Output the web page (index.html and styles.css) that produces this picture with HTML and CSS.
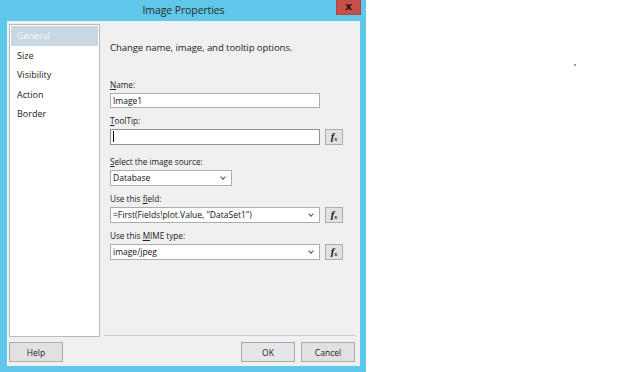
FILE: index.html
```html
<!DOCTYPE html>
<html lang="en">
<head>
    <meta charset="UTF-8">
    <title>Image Properties</title>
    <link rel="stylesheet" href="styles.css">
</head>
<body>
    <div class="dialog">
        <div class="titlebar">
            <span class="title">Image Properties</span>
            <span class="close-btn">x</span>
        </div>

        <div class="client">
            <div class="main">
                <!-- Left nav -->
                <ul class="nav">
                    <li class="selected">General</li>
                    <li>Size</li>
                    <li>Visibility</li>
                    <li>Action</li>
                    <li>Border</li>
                </ul>

                <!-- Right panel -->
                <div class="panel">
                    <p class="heading">Change name, image, and tooltip options.</p>

                    <label class="field-label"><u>N</u>ame:</label>
                    <div class="row">
                        <div class="textbox name-box">Image1</div>
                    </div>

                    <label class="field-label"><u>T</u>oolTip:</label>
                    <div class="row">
                        <div class="textbox focused"><span class="caret"></span></div>
                        <button class="fx-btn"><i>f</i><sub>x</sub></button>
                    </div>

                    <label class="field-label spaced"><u>S</u>elect the image source:</label>
                    <div class="row">
                        <div class="dropdown short">Database<span class="chevron"></span></div>
                    </div>

                    <label class="field-label">Use this <u>f</u>ield:</label>
                    <div class="row">
                        <div class="dropdown">=First(Fields!plot.Value, "DataSet1")<span class="chevron"></span></div>
                        <button class="fx-btn"><i>f</i><sub>x</sub></button>
                    </div>

                    <label class="field-label">Use this <u>M</u>IME type:</label>
                    <div class="row">
                        <div class="dropdown">image/jpeg<span class="chevron"></span></div>
                        <button class="fx-btn"><i>f</i><sub>x</sub></button>
                    </div>
                </div>
            </div>

            <div class="footer">
                <button class="btn">Help</button>
                <div class="footer-right">
                    <button class="btn default">OK</button>
                    <button class="btn">Cancel</button>
                </div>
            </div>
        </div>
    </div>

    <span class="speck"></span>
</body>
</html>
```

FILE: styles.css
```css
body {
    margin: 0;
    padding: 0;
    background-color: #fff;
    font-family: "Open Sans", "Noto Sans", sans-serif;
    color: #1e1e1e;
    position: relative;
    width: 624px;
    height: 372px;
    overflow: hidden;
}

.dialog {
    width: 366px;
    height: 372px;
    background-color: #5fc7e9;
    display: flex;
    flex-direction: column;
    box-sizing: border-box;
    padding: 0 6px 6px 7px;
}

.titlebar {
    height: 21px;
    display: flex;
    align-items: center;
    justify-content: center;
    position: relative;
}

.title {
    font-size: 10.5px;
    letter-spacing: -0.1px;
    color: #2b2b2b;
    margin-top: -1px;
}

.close-btn {
    position: absolute;
    top: 0;
    right: -1px;
    width: 25px;
    height: 15px;
    background-color: #c7504a;
    border: 1px solid #a64a45;
    border-top: none;
    box-sizing: border-box;
    color: #2a1414;
    font-size: 11px;
    font-weight: bold;
    line-height: 13px;
    text-align: center;
    font-family: "DejaVu Sans", sans-serif;
}

.client {
    flex: 1;
    background-color: #f0f0f0;
    display: flex;
    flex-direction: column;
    padding: 3px 5px 4px 2px;
}

.main {
    display: flex;
    gap: 4px;
    height: 313px;
}

/* nav list */
.nav {
    list-style: none;
    margin: 0;
    padding: 1px;
    width: 91px;
    box-sizing: border-box;
    background-color: #fff;
    border: 1px solid #b9b9b9;
}

.nav li {
    height: 19.5px;
    line-height: 19.5px;
    padding-left: 6px;
    font-size: 9px;
    color: #222;
}

.nav li.selected {
    background-color: #c9d7e3;
    color: #f6f8fa;
}

/* right panel */
.panel {
    flex: 1;
    padding: 19px 0 0 6px;
    border-bottom: 1px solid #c9c9c9;
    box-sizing: border-box;
    margin-top: -2px;
    height: 314px;
}

.heading {
    margin: 0 0 23px 0;
    font-size: 9.6px;
    letter-spacing: -0.1px;
    line-height: 14px;
    color: #1e1e1e;
}

.field-label {
    display: block;
    font-size: 8.2px;
    line-height: 13px;
    margin-bottom: 2px;
    color: #222;
}

.field-label.spaced {
    margin-top: 10px;
}

.row {
    display: flex;
    align-items: center;
    gap: 5px;
    margin-bottom: 6px;
}

.textbox,
.dropdown {
    width: 210px;
    height: 16px;
    box-sizing: border-box;
    background-color: #fff;
    border: 1px solid #abadb3;
    font-size: 8.5px;
    line-height: 14px;
    padding-left: 2px;
    position: relative;
    color: #111;
}

.name-box {
    height: 15px;
    line-height: 13px;
}

.textbox.focused {
    border-color: #8c8f96;
}

.caret {
    display: inline-block;
    width: 1px;
    height: 11px;
    background-color: #000;
    vertical-align: middle;
    margin-top: -2px;
}

.dropdown.short {
    width: 122px;
}

.chevron {
    position: absolute;
    right: 6px;
    top: 4px;
    width: 3px;
    height: 3px;
    border-right: 1px solid #555;
    border-bottom: 1px solid #555;
    transform: rotate(45deg);
}

.fx-btn {
    width: 18px;
    height: 16px;
    padding: 0;
    background-color: #e1e1e1;
    border: 1px solid #adadad;
    font-family: "Liberation Serif", serif;
    font-weight: bold;
    font-size: 11px;
    color: #111;
    line-height: 12px;
}

.fx-btn sub {
    font-size: 6px;
    font-style: italic;
    vertical-align: -1px;
}

/* footer */
.footer {
    display: flex;
    justify-content: space-between;
    margin-top: 5px;
}

.footer-right {
    display: flex;
    gap: 6px;
}

.btn {
    width: 54px;
    height: 20px;
    padding: 0;
    background-color: #e1e1e1;
    border: 1px solid #adadad;
    font-family: "Open Sans", "Noto Sans", sans-serif;
    font-size: 8.5px;
    color: #222;
}

.btn.default {
    border-color: #a2a7ad;
    background-color: #e4e6e8;
}

.speck {
    position: absolute;
    left: 574px;
    top: 64px;
    width: 2px;
    height: 2px;
    background-color: #9a9a9a;
}
```
